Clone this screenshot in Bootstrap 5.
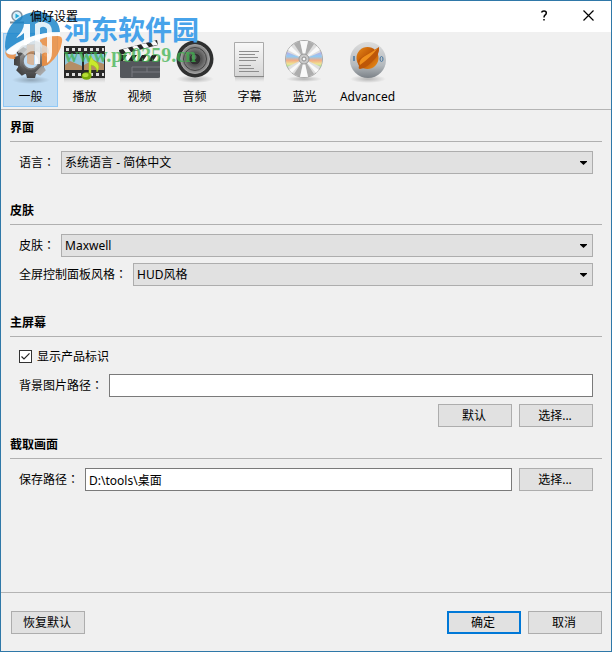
<!DOCTYPE html>
<html lang="zh-CN">
<head>
<meta charset="utf-8">
<meta name="viewport" content="width=device-width, initial-scale=1">
<title>偏好设置</title>
<link rel="stylesheet" href="https://cdn.jsdelivr.net/npm/bootstrap@5.3.0/dist/css/bootstrap.min.css">
<style>
  body { font: 12px/18px "Noto Sans", "Noto Sans CJK SC", sans-serif; color: #000; background: #f0f0f0; }
  .pref-window { border: 1px solid #2f78a8; }
  .title-strip { background: #fff; height: 31px; padding-left: 9px; }
  .title-strip .app-name { position: relative; z-index: 2; margin-left: 6px; }
  .caption-btn { width: 45px; height: 28px; border: 0; background: none; padding: 0 0 3px; color: #000; }
  .tool-strip { padding: 1px 2px 2px; border-bottom: 1px solid #b4b4b4; }
  .tool-item { width: 55px; height: 74px; padding: 0 2px 0 0; border: 1px solid transparent; background: none; color: #000; }
  .tool-item.wide { width: 71px; }
  .tool-item.chosen { background: #c0dcf3; border-color: #90c8f6; padding: 0; }
  .tool-item svg { display: block; width: 55px; height: 52px; margin: 0 0 2px; flex: none; }
  .pref-main { padding: 0 9px; }
  .pref-group + .pref-group { margin-top: 19px; }
  .pref-group.tight { margin-top: 0; }
  .pref-group h2 { font: bold 12px/18px "Noto Sans", "Noto Sans CJK SC", sans-serif; margin: 0; padding: 9px 0 4px; border-bottom: 1px solid #b0b0b0; }
  .group-body { padding: 9px 9px 0; display: flex; flex-direction: column; gap: 7px; }
  .group-body.close-rows { gap: 6px; }
  .field-label { margin-right: 6px; white-space: nowrap; }
  .colon { font-family: "Noto Sans CJK TC", sans-serif; }
  .form-select.combo { height: 23px; min-width: 0; padding: 0 24px 0 3px; font-size: 12px; line-height: 20px; color: #000; border: 1px solid #adadad; border-radius: 0;
    background: #e1e1e1 url("data:image/svg+xml,%3Csvg xmlns='http://www.w3.org/2000/svg' viewBox='0 0 7 4'%3E%3Cpath d='M0 0h7v.7L3.500 4 0 .7z'/%3E%3C/svg%3E") no-repeat right 5px center / 7px 4px; }
  .form-control.line-box { height: 23px; min-width: 0; padding: 0 3px; font-size: 12px; line-height: 20px; color: #000; background: #fff; border: 1px solid #7a7a7a; border-radius: 0; }
  .push { width: 74px; height: 23px; flex: none; padding: 0 2px 0 0; font-size: 12px; line-height: 20px; color: #000; background: #e1e1e1; border: 1px solid #adadad; border-radius: 0; }
  .push.primary { border: 2px solid #0078d7; line-height: 18px; }
  .pair { gap: 7px; }
  .check-row { height: 21px; }
  .form-check-input.tick { width: 13px; height: 13px; margin: 0 5px 0 0; border: 1px solid #333; border-radius: 0; background-color: #fff; }
  .form-check-input.tick:checked { background-color: #fff; border-color: #333; background-size: 11px 11px;
    background-image: url("data:image/svg+xml,%3Csvg xmlns='http://www.w3.org/2000/svg' viewBox='0 0 11 11'%3E%3Cpath d='M1.5 5.5 4 8l5.5-5.7' fill='none' stroke='%23222' stroke-width='1.2'/%3E%3C/svg%3E"); }
  .pref-footer { border-top: 1px solid #b4b4b4; padding: 18px 9px 17px 10px; }
  .site-stamp { left: 3px; top: 8px; z-index: 1; pointer-events: none; }
  .site-stamp svg { width: 60px; height: 60px; }
  .stamp-name { font: bold 27px/32px "Noto Sans CJK SC", sans-serif; color: #47a3ea; padding-top: 4px; }
  .stamp-url { font: bold 20px/20px "Liberation Serif", serif; color: #3fb24f; opacity: .75; }
</style>
<script src="https://cdn.jsdelivr.net/npm/bootstrap@5.3.0/dist/js/bootstrap.bundle.min.js"></script>
</head>
<body>
<div class="pref-window min-vh-100 d-flex flex-column position-relative">
  <header class="title-strip d-flex align-items-center">
    <svg width="14" height="14" viewBox="0 0 14 14" aria-hidden="true"><path d="M0 12.500h14" stroke="#7d8b95" stroke-width="2"/><circle cx="7" cy="6" r="5" fill="#d8f0fa" stroke="#8193a1" stroke-width="1.500"/><path d="M5.500 3.500v5L9.500 6z" fill="#22a9d8"/></svg>
    <span class="app-name">偏好设置</span>
    <button type="button" class="caption-btn ms-auto" aria-label="帮助"><svg width="8" height="11" viewBox="0 0 8 11"><path d="M1.500 2.500Q2 1 4 1q2.300 0 2.300 2Q6.300 4.300 5 5.200 4 6 4 7.500M4 9v1.600" fill="none" stroke="#000" stroke-width="1.500"/></svg></button>
    <button type="button" class="caption-btn" aria-label="关闭"><svg width="11" height="11" viewBox="0 0 11 11"><path d="M.5.5l10 10m0-10l-10 10" stroke="#000" stroke-width="1.200"/></svg></button>
  </header>

  <nav class="tool-strip d-flex" aria-label="设置类别">
    <button type="button" class="tool-item chosen d-flex flex-column align-items-center" aria-current="page">
      <svg viewBox="0 0 55 52" aria-hidden="true">
        <defs><linearGradient id="gearFill" x2="0" y2="1"><stop stop-color="#aaa"/><stop offset="1" stop-color="#414141"/></linearGradient>
        <radialGradient id="shade"><stop stop-color="#000" stop-opacity=".25"/><stop offset="1" stop-color="#000" stop-opacity="0"/></radialGradient></defs>
        <ellipse cx="28" cy="46" rx="19" ry="4" fill="url(#shade)"/>
        <g transform="translate(28 27)" fill="url(#gearFill)"><circle r="14"/>
          <path d="M-4-17h8l1.500 6h-11zM-4 17h8l1.500-6h-11z"/><path d="M-4-17h8l1.500 6h-11zM-4 17h8l1.500-6h-11z" transform="rotate(45)"/><path d="M-4-17h8l1.500 6h-11zM-4 17h8l1.500-6h-11z" transform="rotate(90)"/><path d="M-4-17h8l1.500 6h-11zM-4 17h8l1.500-6h-11z" transform="rotate(135)"/>
          <circle r="8" fill="#c0dcf3" stroke="#777" stroke-width="1.500"/></g>
      </svg><span>一般</span></button>
    <button type="button" class="tool-item d-flex flex-column align-items-center">
      <svg viewBox="0 0 55 52" aria-hidden="true">
        <defs><linearGradient id="fade" x2="0" y2="1"><stop stop-color="#888" stop-opacity=".4"/><stop offset="1" stop-color="#aaa" stop-opacity="0"/></linearGradient></defs>
        <path d="M7 44h41v5H7z" fill="url(#fade)"/>
        <path d="M7 12h41v32H7z" fill="#292929"/>
        <path d="M9 15.500h38M9 40.500h38" stroke="#ddd" stroke-width="3" stroke-dasharray="3 3"/>
        <path d="M8 20h17v16H8zM27 20h20v16H27z" fill="#8fc6dc"/>
        <path d="M8 31l5-4 12 5v4H8zM27 31l9-5 11 4v6H27z" fill="#b48d65"/>
        <path d="M32 42V22h2q1 4 5 6 5 4 1 10 0-6-6-7v11z" fill="#c9e92c" stroke="#9cc91a" stroke-width=".6"/>
        <ellipse cx="29.500" cy="42" rx="5" ry="3.800" fill="#79aa08"/><ellipse cx="28.500" cy="41" rx="3" ry="2" fill="#b6dc36"/>
      </svg><span>播放</span></button>
    <button type="button" class="tool-item d-flex flex-column align-items-center">
      <svg viewBox="0 0 55 52" aria-hidden="true">
        <path d="M8 43h40v6H8z" fill="url(#fade)"/>
        <path d="M7 16 45 6l1 5L8 21z" fill="#252525"/>
        <path d="M11 15l5-1 3 4-5 1zM20 12.600l5-1 3 4-5 1zM29 10.200l5-1 3 4-5 1zM38 7.800l5-1 3 4-5 1z" fill="#fafafa"/>
        <path d="M8 21h40v22q0 1-2 1H10q-2 0-2-1z" fill="#54575c"/><path d="M8 21h40v6H8z" fill="#252525"/>
        <path d="M15 21h5l-4 6h-5zM25 21h5l-4 6h-5zM35 21h5l-4 6h-5zM45 21h3l-2 6h-5z" fill="#fafafa"/>
        <path d="M20 33h28M20 33v10M35 33v5M20 38h28" stroke="#787b80" fill="none"/>
      </svg><span>视频</span></button>
    <button type="button" class="tool-item d-flex flex-column align-items-center">
      <svg viewBox="0 0 55 52" aria-hidden="true">
        <defs><radialGradient id="coneFill"><stop stop-color="#999"/><stop offset=".45" stop-color="#555"/><stop offset="1" stop-color="#9b9b9b"/></radialGradient></defs>
        <ellipse cx="28" cy="45" rx="19" ry="4" fill="url(#shade)"/>
        <circle cx="28" cy="25" r="18.500" fill="#2f3030"/><circle cx="28" cy="25" r="14.500" fill="url(#coneFill)" stroke="#a3a3a3"/>
        <circle cx="28" cy="25" r="11.500" fill="none" stroke="#444"/><circle cx="28" cy="25" r="5.500" fill="#303030"/><circle cx="27" cy="23" r="2.500" fill="#646464"/>
      </svg><span>音频</span></button>
    <button type="button" class="tool-item d-flex flex-column align-items-center">
      <svg viewBox="0 0 55 52" aria-hidden="true">
        <defs><linearGradient id="paper" x2="0" y2="1"><stop stop-color="#f8f8f8"/><stop offset="1" stop-color="#d6d6d6"/></linearGradient></defs>
        <path d="M13 43h29v5H13z" fill="url(#fade)"/><path d="M12.500 8.500h29v34h-29z" fill="url(#paper)" stroke="#aaa"/><path d="M13 42.500h29" stroke="#888"/>
        <path d="M17 17.500h20M17 20.500h16M17 23.500h19M17 26.500h17M17 31.500h12M17 34.500h15M17 37.500h20" stroke="#8d8d8d"/>
      </svg><span>字幕</span></button>
    <button type="button" class="tool-item d-flex flex-column align-items-center">
      <svg viewBox="0 0 55 52" aria-hidden="true">
        <defs><linearGradient id="prism" x2="0" y2="1"><stop stop-color="#b0a5ec"/><stop offset=".3" stop-color="#85c6f4"/><stop offset=".55" stop-color="#f6a276"/><stop offset=".8" stop-color="#f2e686"/><stop offset="1" stop-color="#8bd99a"/></linearGradient></defs>
        <ellipse cx="27" cy="45" rx="18" ry="3" fill="url(#shade)"/>
        <circle cx="27" cy="25" r="18.500" fill="#dedede" stroke="#aaa"/>
        <path d="M27 25 10 18q-2 8 0 15zM27 25l17-7q2 8 0 15z" fill="url(#prism)" opacity=".85"/>
        <path d="M27 25 17 10l6-3zM27 25l4-18 6 3zM27 25 17 40l6 3zM27 25l4 18 6-3z" fill="#989898" opacity=".7"/>
        <path d="M27 25 23 7h8zM27 25l-4 18h8zM27 25 11 16l3-4zM27 25l16-9-3-4zM27 25 12 36l3 3zM27 25l15 11-3 3z" fill="#fff" opacity=".8"/>
        <circle cx="27" cy="25" r="5" fill="#c9c9c9" stroke="#999"/><circle cx="27" cy="25" r="2" fill="#f6f6f6" stroke="#8e8e8e"/>
      </svg><span>蓝光</span></button>
    <button type="button" class="tool-item wide d-flex flex-column align-items-center">
      <svg viewBox="0 0 55 52" aria-hidden="true">
        <defs><linearGradient id="knob" x2="0" y2="1"><stop stop-color="#ddd"/><stop offset=".65" stop-color="#b4b9bd"/><stop offset="1" stop-color="#7b8187"/></linearGradient>
        <linearGradient id="amber" x2="1" y2="1"><stop stop-color="#e98a18"/><stop offset=".5" stop-color="#bd5505"/><stop offset="1" stop-color="#ef951c"/></linearGradient></defs>
        <ellipse cx="28" cy="45" rx="18" ry="4" fill="url(#shade)"/>
        <circle cx="28" cy="26" r="18" fill="url(#knob)"/>
        <path d="M14 22v5" stroke="#45759e" stroke-width="1.500"/><ellipse cx="41.500" cy="25" rx="1.500" ry="2.500" fill="none" stroke="#45759e"/>
        <circle cx="27.500" cy="24" r="11" fill="url(#amber)"/><path d="M39 13q1 8-7 15-6 6-12 7-2 0-1-3-4-6 5-10 8-4 15-9z" fill="#bd5708"/><path d="M38 14Q30 24 20 31q-2-5 5-9 7-4 13-8z" fill="#f0901c"/>
      </svg><span>Advanced</span></button>
  </nav>

  <main class="pref-main flex-grow-1">
    <section class="pref-group"><h2>界面</h2>
      <div class="group-body">
        <div class="d-flex align-items-center"><label class="field-label" for="lang">语言<span class="colon" lang="zh-TW">：</span></label><select id="lang" class="form-select combo"><option>系统语言 - 简体中文</option></select></div>
      </div>
    </section>
    <section class="pref-group"><h2>皮肤</h2>
      <div class="group-body close-rows">
        <div class="d-flex align-items-center"><label class="field-label" for="skin">皮肤<span class="colon" lang="zh-TW">：</span></label><select id="skin" class="form-select combo"><option>Maxwell</option></select></div>
        <div class="d-flex align-items-center"><label class="field-label" for="panel">全屏控制面板风格<span class="colon" lang="zh-TW">：</span></label><select id="panel" class="form-select combo"><option>HUD风格</option></select></div>
      </div>
    </section>
    <section class="pref-group"><h2>主屏幕</h2>
      <div class="group-body">
        <div class="check-row d-flex align-items-center"><input class="form-check-input tick" type="checkbox" id="brand" checked><label for="brand">显示产品标识</label></div>
        <div class="d-flex align-items-center"><label class="field-label" for="bg">背景图片路径<span class="colon" lang="zh-TW">：</span></label><input type="text" id="bg" class="form-control line-box"></div>
        <div class="pair d-flex justify-content-end"><button type="button" class="btn push">默认</button><button type="button" class="btn push">选择...</button></div>
      </div>
    </section>
    <section class="pref-group tight"><h2>截取画面</h2>
      <div class="group-body">
        <div class="pair d-flex align-items-center"><div class="d-flex align-items-center flex-grow-1"><label class="field-label" for="save">保存路径<span class="colon" lang="zh-TW">：</span></label><input type="text" id="save" class="form-control line-box" value="D:\tools\桌面"></div><button type="button" class="btn push">选择...</button></div>
      </div>
    </section>
  </main>

  <footer class="pref-footer d-flex pair">
    <button type="button" class="btn push me-auto">恢复默认</button>
    <button type="button" class="btn push primary">确定</button>
    <button type="button" class="btn push">取消</button>
  </footer>

  <div class="site-stamp position-absolute d-flex">
    <svg viewBox="0 0 60 60" aria-hidden="true">
      <path d="M1 38Q1 16 18 7 38-3 51 11q5 5 5 13Q42 22 30 27 14 33 2 43z" fill="#1683c8" opacity=".82"/>
      <path d="M54 27q5 0 4 6-2 13-13 22-3 2-7 2V37q0-5-4-5Q44 26 54 27z" fill="#f28a35" opacity=".82"/>
      <path d="M1 41q1 6 11 4l-1 5Q1 51 1 41z" fill="#f28a35" opacity=".8"/>
      <path d="M23 36h7v20q-5 0-7-2z" fill="#f28a35" opacity=".45"/>
      <path d="M2 42Q24 23 56 23v4Q30 26 11 45 4 47 2 42z" fill="#fff" opacity=".92"/>
      <path d="M12 29Q20 21 20 15h6v19l-6 3V24q-3 3-8 5z" fill="#fff" opacity=".95"/>
      <path d="M31 31V15q6-5 14 0 3 2 3 10v18q0 8-5 11V20q-3-4-7-1v36h-5z" fill="#fff" opacity=".85"/>
      <path d="M14 44q1-9 9-8 8-8 16 0 7 1 6 9-4-3-7 0-11-7-17 2-3-5-7-3z" fill="#dfe3e4" opacity=".75"/>
    </svg>
    <div><div class="stamp-name">河东软件园</div><div class="stamp-url">www.pc0359.cn</div></div>
  </div>
</div>
</body>
</html>
